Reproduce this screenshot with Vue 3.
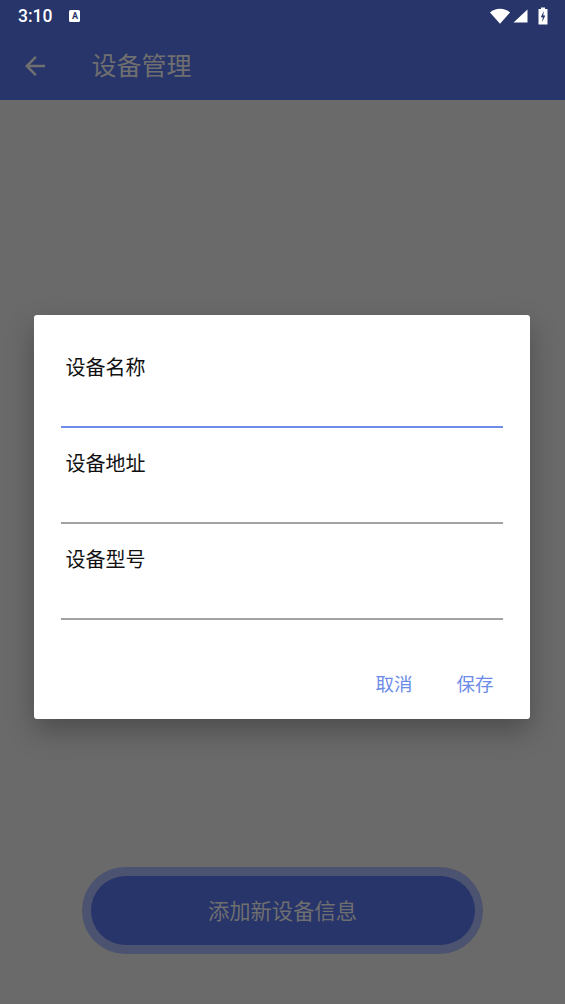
<script setup>
const fields = [
  { label: '设备名称', active: true },
  { label: '设备地址', active: false },
  { label: '设备型号', active: false },
]
</script>

<template>
  <div class="page">
    <header class="appbar">
      <div class="status">
        <span class="time">3:10</span>
        <span class="notif">A</span>
        <span class="spacer"></span>
        <svg class="wifi" width="20" height="16" viewBox="0 0 20 16"><path d="M0 4.400C2.700 1.900 6.200 0.700 10 0.700s7.300 1.200 10 3.700L10 15.700z" fill="#fff"/></svg>
        <svg class="signal" width="15" height="14" viewBox="0 0 15 14"><path d="M14.500 0.500V13.500H0.500z" fill="#fff"/></svg>
        <svg class="battery" width="10" height="18" viewBox="0 0 10 18"><path fill-rule="evenodd" d="M3 0.500h4v1.500h2.500v15.500H0.500V2H3zM5.800 4L2.800 10.200H4.800L4.200 15L7.300 8.600H5.300z" fill="#fff"/></svg>
      </div>
      <div class="toolbar">
        <svg class="back" width="30" height="30" viewBox="0 0 24 24"><path d="M20 11H7.830l5.590-5.590L12 4l-8 8 8 8 1.410-1.410L7.830 13H20v-2z" fill="#6f6f6f"/></svg>
        <h1 class="title">设备管理</h1>
      </div>
    </header>

    <main class="content">
      <div class="add-ring">
        <button class="add-btn">添加新设备信息</button>
      </div>
    </main>

    <div class="dialog">
      <div v-for="f in fields" :key="f.label" class="field">
        <label class="label">{{ f.label }}</label>
        <div class="line" :class="{ active: f.active }"></div>
      </div>
      <div class="actions">
        <button class="action">取消</button>
        <button class="action">保存</button>
      </div>
    </div>
  </div>
</template>

<style scoped>
.page {
  position: relative;
  width: 565px;
  height: 1004px;
  display: flex;
  flex-direction: column;
  background: #6a6a6a;
  overflow: hidden;
  font-family: "Noto Sans CJK SC", "Noto Sans", sans-serif;
}
.appbar {
  height: 100px;
  flex: none;
  background: #28356a;
  display: flex;
  flex-direction: column;
}
.status {
  height: 32px;
  display: flex;
  align-items: center;
  padding: 0 17px 0 18px;
  color: #fff;
}
.time {
  font-family: Roboto, sans-serif;
  font-size: 17.500px;
  font-weight: 500;
  line-height: 32px;
}
.notif {
  margin-left: 17px;
  width: 11px;
  height: 12px;
  background: #fff;
  border-radius: 1.500px;
  color: #28356a;
  font: 700 9px/12px Roboto, sans-serif;
  text-align: center;
}
.spacer { flex: 1; }
.wifi { margin-right: 3px; }
.signal { margin-right: 10px; }
.toolbar {
  flex: 1;
  display: flex;
  align-items: center;
  padding: 0 0 4px 20px;
}
.back {
  flex: none;
  margin-top: 3px;
}
.title {
  margin: 0 0 0 41.500px;
  font-size: 25px;
  font-weight: 400;
  color: #6f6f6f;
  line-height: 36px;
}
.content {
  flex: 1;
  display: flex;
  flex-direction: column;
  justify-content: flex-end;
  align-items: center;
  padding-bottom: 50px;
}
.add-ring {
  padding: 9px 8.500px;
  border-radius: 44px;
  background: #4c5370;
}
.add-btn {
  display: block;
  width: 384px;
  height: 69px;
  padding: 0 0 2px;
  border: 0;
  border-radius: 35px;
  background: #28356a;
  color: #6f6f6f;
  font-family: inherit;
  font-size: 21.300px;
}
.dialog {
  position: absolute;
  left: 34px;
  top: 315px;
  width: 496px;
  height: 404px;
  box-sizing: border-box;
  padding: 0 27px 0;
  display: flex;
  flex-direction: column;
  background: #fff;
  border-radius: 3px;
  box-shadow: 0 12px 28px rgba(0, 0, 0, 0.28);
}
.field {
  height: 96px;
  display: flex;
  flex-direction: column;
}
.label {
  padding: 20px 0 0 4.500px;
  font-size: 20px;
  line-height: 30px;
  color: #111;
}
.field:first-child { height: 113px; }
.field:first-child .label { padding-top: 37px; }
.field:last-child { height: 97px; }
.line {
  margin-top: auto;
  height: 2px;
  background: #a2a2a2;
}
.field:last-child .line {
  transform: translateY(0.500px);
}
.line.active { background: #6c8ce8; }
.actions {
  flex: 1;
  display: flex;
  justify-content: flex-end;
  align-items: flex-start;
  gap: 44px;
  padding: 49px 9.500px 0 0;
}
.action {
  padding: 0;
  border: 0;
  background: none;
  font-family: inherit;
  font-size: 18.500px;
  line-height: 28px;
  color: #6c8ce8;
}
</style>
